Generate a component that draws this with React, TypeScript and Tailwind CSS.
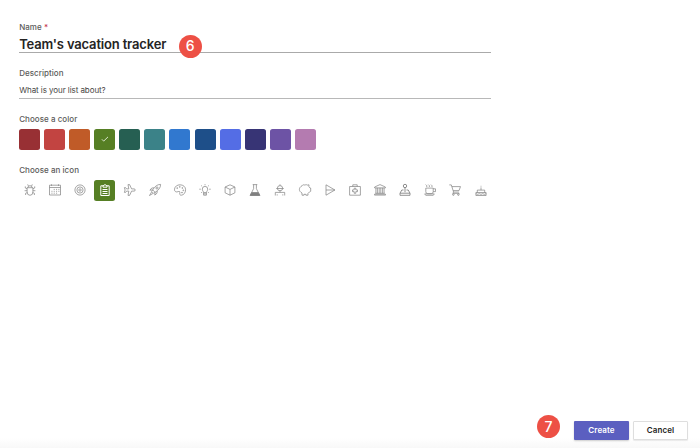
import React from "react";

const colors = [
  { name: "Dark red", cls: "bg-[#983034]" },
  { name: "Red", cls: "bg-[#c24441]" },
  { name: "Orange", cls: "bg-[#c05b28]" },
  { name: "Green", cls: "bg-[#567f24]", selected: true },
  { name: "Dark green", cls: "bg-[#265f52]" },
  { name: "Teal", cls: "bg-[#3b8288]" },
  { name: "Blue", cls: "bg-[#3178cf]" },
  { name: "Navy", cls: "bg-[#1e4f89]" },
  { name: "Cornflower", cls: "bg-[#546de5]" },
  { name: "Indigo", cls: "bg-[#373475]" },
  { name: "Purple", cls: "bg-[#6d53a5]" },
  { name: "Pink", cls: "bg-[#b47bb0]" },
];

const icons: { name: string; art: React.ReactNode }[] = [
  {
    name: "Bug",
    art: (
      <>
        <path d="M3.1 3.7h5.8v4.2a2.9 3.4 0 0 1-5.8 0zM3.9 3.7a2.1 2 0 0 1 4.2 0M4.5 2.2 3.7.4M7.5 2.2 8.3.4" />
        <path d="M3.1 4.9 1.3 4V2.4M8.9 4.9l1.8-.9V2.4M3.1 6.7H.6M8.9 6.7h2.5M3.3 8.5l-1.7.8v1.7M8.7 8.5l1.7.8v1.7" />
      </>
    ),
  },
  {
    name: "Calendar",
    art: (
      <>
        <path d="M.5 1.2h11v9.8H.5zM.5 3.5h11M2.5.3v1.6M9.5.3v1.6" />
        <path strokeDasharray="1.1 1.2" d="M4.7 5.4h5.8M2.4 7.3h8M2.4 9.2h5.8" />
      </>
    ),
  },
  {
    name: "Target",
    art: (
      <>
        <circle cx="6" cy="6" r="5.1" />
        <circle cx="6" cy="6" r="3.1" />
        <circle cx="6" cy="6" r="1.2" />
      </>
    ),
  },
  {
    name: "Clipboard",
    art: (
      <>
        <path strokeWidth="1" d="M4 1.8H1.8v9.7h8.4V1.8H8" />
        <path strokeWidth="1" d="M4 1.6h1a1 1 0 0 1 2 0h1v1.6H4z" />
        <path strokeWidth="1" d="M3.5 5.5h5M3.5 7.5h5M3.5 9.5h5" />
      </>
    ),
  },
  {
    name: "Airplane",
    art: (
      <path d="M7.6 4.9h2.5a1.1 1.1 0 0 1 0 2.2H7.6L5.6 11.4H4l.8-4.3H2.6L1.6 8.4H.4L1.1 6 .4 3.6h1.2l1 1.3h2.2L4 .6h1.6z" />
    ),
  },
  {
    name: "Rocket",
    art: (
      <>
        <path d="M11.6.4C8.3.4 5.9 2.2 3.7 5.9l2.4 2.4c3.7-2.2 5.5-4.6 5.5-7.9zM5.1 3.8 2.8 4 .9 6.2l2.8-.3M8.2 6.9 8 9.2 5.8 11.1l.3-2.8M3.7 5.9l-1.1 1.5 2 2 1.5-1.1M2.6 8 .5 11.5 4 9.4" />
        <circle cx="8" cy="4" r="1.1" />
      </>
    ),
  },
  {
    name: "Palette",
    art: (
      <>
        <path d="M.5 5.1C.9 2.3 3.3.8 6 .8c3.3 0 5.6 2.1 5.6 5 0 2.9-1.9 5.2-4.2 5.4-1.5.1-2-.9-1.6-2.1.4-1.5-.4-2.1-1.6-1.5C2.4 8.5.2 7.8.5 5.1z" />
        <circle cx="3.2" cy="4.1" r=".45" />
        <circle cx="5.8" cy="2.9" r=".45" />
        <circle cx="8.3" cy="4" r=".45" />
        <circle cx="9.3" cy="6.3" r=".45" />
        <circle cx="8" cy="8.6" r=".45" />
      </>
    ),
  },
  {
    name: "Light bulb",
    art: (
      <>
        <path d="M4.6 8.6C4.6 7.4 3.3 6.9 3.3 5.1a2.7 2.7 0 0 1 5.4 0c0 1.8-1.3 2.3-1.3 3.5zM4.6 8.6v2.6h2.8V8.6M4.6 9.9h2.8" />
        <path d="M6 .2v1.1M2.2 1.5l.9.9M9.8 1.5l-.9.9M.3 5.2h1.5M10.2 5.2h1.5M2.1 9l.9-.9M9.9 9 9 8.1" />
      </>
    ),
  },
  {
    name: "Cube",
    art: <path d="M6 .8 10.9 3v5.8L6 11.2 1.1 8.8V3zM1.1 3 6 5.4 10.9 3M6 5.4v5.8" />,
  },
  {
    name: "Flask",
    art: (
      <>
        <path d="M3.7.6h4.6M4.6.6v4.1L1.2 11.4h9.6L7.4 4.7V.6" />
        <path fill="currentColor" d="M2.7 8.5h6.6l1.5 2.9H1.2z" />
      </>
    ),
  },
  {
    name: "Robot",
    art: (
      <>
        <path d="M6 .3v1.3M3.3 4.4a2.7 2.8 0 0 1 5.4 0 2.7 2.3 0 0 1-5.4 0zM2.3 4.5h7.4M6 6.7v1.6" />
        <path d="M1.3 11.5V8.4h9.4v3.1M3.2 11.5v-1.2M8.8 11.5v-1.2" />
      </>
    ),
  },
  {
    name: "Piggy bank",
    art: (
      <path d="M3 1.8c.6-1 1.8-1.3 2.9-.7.9-.5 1.8-.5 2.5 0L10 .8l-.1 1.8 1.1 1.5h.7v3.2l-1.3.7L9 9.4v1.8H6.9v-.9H5v.9H3V9C1.4 8.1.4 7 .4 5.5c0-1.7 1.1-2.9 2.6-3.7z" />
    ),
  },
  { name: "Send", art: <path d="M2 .8v10.4L10.9 6zM2 6h8.9" /> },
  {
    name: "First aid",
    art: (
      <>
        <path d="M.6 2.5h10.8v8.7H.6zM3.8 2.5V.8h4.4v1.7" />
        <path d="M5.2 4.2h1.6v1.7h1.7v1.7H6.8v1.7H5.2V7.6H3.5V5.9h1.7z" />
      </>
    ),
  },
  {
    name: "Bank",
    art: (
      <path d="M.6 3.9V3L6 .6 11.4 3v.9zM1.9 3.9v5.3M3.4 3.9v5.3M5.2 3.9v5.3M6.8 3.9v5.3M8.6 3.9v5.3M10.1 3.9v5.3M1.3 9.3h9.4M.5 11.1h11M.5 11.1v-.9h11v.9" />
    ),
  },
  {
    name: "Joystick",
    art: (
      <>
        <circle cx="6" cy="2" r="1.7" strokeWidth=".9" />
        <path strokeWidth=".85" d="M6 3.7v4.5M4.5 6H2.8L1 9.2v2.1h10V9.2L9.2 6H7.5M1 9.2h10" />
      </>
    ),
  },
  {
    name: "Coffee",
    art: (
      <>
        <path d="M1.8 4.1h7.4v3.6a2 2 0 0 1-2 2H3.8a2 2 0 0 1-2-2zM9.2 4.8h2.3v2.8H9.2M.7 9.9h9.6l-1 1.4H1.7z" />
        <path d="M1.7.6 2.9 1.8 2.7 3M4.3.6l1.2 1.2L5.3 3M6.9.6l1.2 1.2L7.9 3" />
      </>
    ),
  },
  {
    name: "Shopping cart",
    art: (
      <>
        <path d="M.3.9h2l2.3 7.2h5.3M2.9 2.6h8.6L10 6.6H4.1M4.6 8.1l-.9 1.3h6.8" />
        <circle cx="4.4" cy="10.6" r=".8" />
        <circle cx="9.4" cy="10.6" r=".8" />
      </>
    ),
  },
  {
    name: "Cake",
    art: (
      <path d="M.9 11.5h10.2V8.5H.9zM2.3 8.5V6.1h7.4v2.4M6 6.1V3.4M6 2.6v-.8M.9 9.7l1.7.6 1.7-.6 1.7.6 1.7-.6 1.7.6 1.7-.6" />
    ),
  },
];

function StepMarker({ n }: { n: number }) {
  return (
    <span className="flex size-[23px] items-center justify-center rounded-full bg-[#ed5045] text-[14px] font-medium leading-none text-white">
      {n}
    </span>
  );
}

const labelCls = "text-[8px] leading-[10px] font-medium tracking-[0.04px] text-[#5c5b5a]";

export default function App() {
  return (
    <main className="flex h-[448px] w-[700px] flex-col justify-between overflow-hidden bg-white font-['Inter','Liberation_Sans',sans-serif]">
      <form className="w-[491px] pl-[19.2px] pt-[22px]">
        <div className={labelCls}>
          Name <span className="text-[#c4314b]">*</span>
        </div>
        <div className="relative mt-[3px] h-[18px] border-b border-[#aaa]">
          <div className="whitespace-nowrap text-[13px] font-semibold leading-[18px] tracking-[-0.17px] text-[#252423]">
            Team&apos;s vacation tracker
          </div>
          <div className="absolute left-[159.6px] top-[-0.5px]">
            <StepMarker n={6} />
          </div>
        </div>

        <div className={`mt-[15px] ${labelCls}`}>Description</div>
        <div className="mt-[4px] h-[17px] border-b border-[#b8b8b8] text-[8px] leading-[17px] tracking-[-0.07px] text-[#484644]">
          What is your list about?
        </div>

        <div className={`mt-[15px] ${labelCls}`}>Choose a color</div>
        <div className="mt-[4.6px] flex gap-[4.05px]">
          {colors.map((c) => (
            <div
              key={c.name}
              aria-label={c.name}
              className={`flex h-[21px] w-[21px] shrink-0 items-center justify-center rounded-[2.5px] ${c.cls}`}
            >
              {c.selected && (
                <svg viewBox="0 0 10 10" className="size-[10px]" fill="none" stroke="#e8f0df" strokeWidth=".9">
                  <path d="m1.9 5.3 1.8 1.8 4.3-4.2" />
                </svg>
              )}
            </div>
          ))}
        </div>

        <div className={`mt-[15.4px] ${labelCls}`}>Choose an icon</div>
        <div className="mt-[5px] flex gap-[4.05px]">
          {icons.map((icon) => (
            <div
              key={icon.name}
              aria-label={icon.name}
              className={`flex h-[21px] w-[21px] shrink-0 items-center justify-center rounded-[2.5px] ${
                icon.name === "Clipboard" ? "bg-[#567f24] text-white" : "text-[#808080]"
              }`}
            >
              <svg
                viewBox="0 0 12 12"
                className="size-[12px] overflow-visible"
                fill="none"
                stroke="currentColor"
                strokeWidth=".7"
                strokeLinejoin="round"
              >
                {icon.art}
              </svg>
            </div>
          ))}
        </div>
      </form>

      <footer className="flex h-[33px] items-start justify-end bg-linear-to-b from-white from-70% to-[#f8f8f8] pr-[12px]">
        <div className="mr-[14px] mt-[0.4px]">
          <StepMarker n={7} />
        </div>
        <button className="mr-[4px] mt-[5.5px] h-[19px] w-[55px] rounded-[1px] bg-[#5b5fc0] text-[8px] font-semibold leading-[19px] tracking-[0.1px] text-white shadow-[0_1px_2px_rgba(0,0,0,0.2)]">
          Create
        </button>
        <button className="mt-[5.5px] h-[19px] w-[55px] rounded-[1px] border border-[#dedede] bg-white text-[8px] font-semibold leading-[17px] tracking-[0.1px] text-[#252423] shadow-[0_1px_1px_rgba(0,0,0,0.08)]">
          Cancel
        </button>
      </footer>
    </main>
  );
}
